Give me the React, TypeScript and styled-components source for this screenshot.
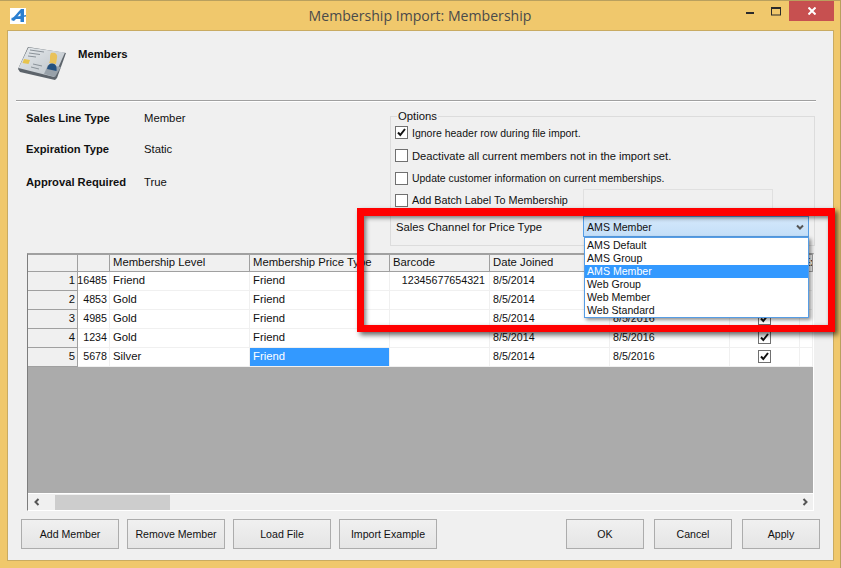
import React from 'react'
import styled, { createGlobalStyle } from 'styled-components'

const GlobalStyle = createGlobalStyle`
  html, body {
    margin: 0;
    padding: 0;
    background: #f0c86c;
  }
  body {
    font-family: "Liberation Sans", Arial, sans-serif;
    font-size: 11.3px;
    color: #111;
  }
`

const Window = styled.div`
  position: relative;
  width: 841px;
  height: 568px;
  box-sizing: border-box;
  display: flex;
  flex-direction: column;
  background: #f0c86c;
  border-top: 1px solid #b9a05e;
  border-right: 1px solid #b9a05e;
  overflow: hidden;
`

const TitleBar = styled.div`
  position: relative;
  height: 29px;
  flex: none;
  display: flex;
  align-items: flex-start;
  justify-content: center;
`

const AppLogo = styled.svg`
  position: absolute;
  left: 10px;
  top: 7px;
`

const Title = styled.div`
  font-family: "Open Sans", sans-serif;
  font-size: 14.1px;
  color: #4a4a4a;
  line-height: 30px;
`

const WindowControls = styled.div`
  position: absolute;
  top: 0;
  right: 6px;
  display: flex;
  align-items: flex-start;
`

const ControlButton = styled.div<{ $close?: boolean }>`
  width: ${(p) => (p.$close ? '45px' : '26px')};
  height: 20px;
  display: flex;
  align-items: center;
  justify-content: center;
  background: ${(p) => (p.$close ? '#c75050' : 'transparent')};
`

const Client = styled.div`
  width: 827px;
  height: 531px;
  margin-left: 7px;
  box-sizing: border-box;
  display: flex;
  flex-direction: column;
  background: #f0f0f0;
  border: 1px solid #c9ab62;
`

const Header = styled.div`
  height: 69px;
  flex: none;
  box-sizing: border-box;
  padding: 16px 0 0 10px;
  display: flex;
  align-items: flex-start;
  gap: 12px;
`

const HeaderTitle = styled.div`
  font-weight: bold;
  line-height: 14px;
`

const Separator = styled.div`
  height: 1px;
  flex: none;
  margin: 0 17px 0 8px;
  background: #a0a0a0;
  border-bottom: 1px solid #fff;
`

const Middle = styled.div`
  height: 151px;
  flex: none;
  display: flex;
  justify-content: space-between;
  padding: 7px 18px 0 18px;
  box-sizing: border-box;
`

const Details = styled.div`
  width: 300px;
  display: flex;
  flex-direction: column;
`

const DetailRow = styled.div<{ $h: number }>`
  height: ${(p) => p.$h}px;
  display: flex;
  align-items: center;
`

const DetailLabel = styled.div`
  width: 118px;
  font-weight: bold;
  font-size: 11.2px;
`

const DetailValue = styled.div``

const Options = styled.fieldset`
  width: 424px;
  height: 137px;
  margin: 0;
  padding: 0 5px;
  box-sizing: border-box;
  border: 1px solid #dcdcdc;
`

const OptionsLegend = styled.legend`
  padding: 0 1px;
  margin-left: 1px;
  line-height: 14px;
`

const OptionRow = styled.div<{ $h: number }>`
  height: ${(p) => p.$h}px;
  display: grid;
  grid-template-columns: 187px 1fr;
  align-items: center;
`

const CheckLabel = styled.label<{ $size: number }>`
  display: flex;
  align-items: center;
  gap: 4px;
  margin-left: -1px;
  white-space: nowrap;
  font-size: ${(p) => p.$size}px;
`

const CheckBox = styled.span`
  width: 13px;
  height: 13px;
  flex: none;
  box-sizing: border-box;
  display: flex;
  align-items: center;
  justify-content: center;
  background: #fff;
  border: 1px solid #707070;
`

const BatchInput = styled.div`
  width: 190px;
  height: 22px;
  box-sizing: border-box;
  border: 1px solid #e0e0e0;
  background: #f0f0f0;
`

const SalesRow = styled.div`
  margin-top: 4px;
  display: grid;
  grid-template-columns: 187px 1fr;
  align-items: center;
`

const Combo = styled.div`
  position: relative;
  height: 21px;
  box-sizing: border-box;
  width: 226px;
  padding: 0 3px 0 3px;
  display: flex;
  align-items: center;
  justify-content: space-between;
  font-size: 10.6px;
  border: 1px solid #569de5;
  background: linear-gradient(#d4e8fb, #c4dff8);
`

const DropList = styled.div`
  position: absolute;
  z-index: 3;
  top: 20px;
  left: 0;
  width: 225px;
  box-sizing: border-box;
  padding: 1px 0 0;
  background: #fff;
  border: 1px solid #569de5;
  box-shadow: 2px 2px 4px rgba(0, 0, 0, 0.45);
`

const DropItem = styled.div<{ $active?: boolean }>`
  height: 13px;
  line-height: 13px;
  padding: 0 2px;
  color: ${(p) => (p.$active ? '#fff' : '#111')};
  background: ${(p) => (p.$active ? '#3399ff' : 'transparent')};
`

const GridView = styled.div`
  width: 787px;
  height: 258px;
  margin-left: 19px;
  flex: none;
  box-sizing: border-box;
  display: flex;
  flex-direction: column;
  border-left: 1px solid #7d7d7d;
  border-top: 2px solid #a0a0a0;
  border-right: 1px solid #fff;
  border-bottom: 1px solid #fff;
  background: #ababab;
`

const GridRow = styled.div`
  display: grid;
  grid-template-columns: 50px 32px 140px 140px 100px 120px 120px 70px 13px;
  flex: none;
`

const HeadCell = styled.div`
  height: 16px;
  line-height: 15px;
  padding-left: 3px;
  background: #f0f0f0;
  border-right: 1px solid #a0a0a0;
  border-bottom: 1px solid #a0a0a0;
  white-space: nowrap;
  overflow: hidden;
`

const RowHead = styled.div`
  height: 19px;
  box-sizing: border-box;
  line-height: 16px;
  padding-right: 2px;
  text-align: right;
  background: #f0f0f0;
  border-right: 1px solid #a0a0a0;
  border-bottom: 1px solid #a0a0a0;
`

const Cell = styled.div<{ $right?: boolean; $selected?: boolean; $center?: boolean; $num?: boolean }>`
  height: 19px;
  box-sizing: border-box;
  padding: 0 ${(p) => (p.$right ? '2px' : '3px')} 2px 3px;
  white-space: nowrap;
  display: flex;
  align-items: center;
  font-size: ${(p) => (p.$num ? '10.7px' : 'inherit')};
  justify-content: ${(p) => (p.$right ? 'flex-end' : p.$center ? 'center' : 'flex-start')};
  color: ${(p) => (p.$selected ? '#fff' : '#111')};
  background: ${(p) => (p.$selected ? '#3399ff' : '#fff')};
  border-right: 1px solid #f0f0f0;
  border-bottom: 1px solid #f0f0f0;
`

const BarcodeCell = styled(Cell)`
  padding-right: 4px;
`

const GridFill = styled.div`
  flex: 1;
`

const ScrollBar = styled.div`
  height: 17px;
  flex: none;
  box-sizing: border-box;
  display: flex;
  align-items: center;
  background: #f0f0f0;
  border-top: 1px solid #fff;
`

const ScrollArrow = styled.div`
  width: 17px;
  display: flex;
  justify-content: center;
`

const ScrollThumb = styled.div`
  width: 115px;
  height: 15px;
  margin-left: 10px;
  background: #cdcdcd;
`

const ScrollTrack = styled.div`
  flex: 1;
`

const ButtonBar = styled.div`
  flex: none;
  margin-top: 8px;
  padding: 0 13px 0 13px;
  display: flex;
  justify-content: space-between;
`

const ButtonGroup = styled.div`
  display: flex;
  gap: 8px;
`

const RightButtonGroup = styled(ButtonGroup)`
  gap: 10px;
`

const Button = styled.div<{ $w: number }>`
  width: ${(p) => p.$w}px;
  height: 30px;
  box-sizing: border-box;
  display: flex;
  align-items: center;
  justify-content: center;
  font-size: 10.6px;
  border: 1px solid #acacac;
  background: linear-gradient(#f0f0f0, #e5e5e5);
`

const Callout = styled.div`
  position: absolute;
  left: 357px;
  top: 207px;
  width: 478px;
  height: 124px;
  box-sizing: border-box;
  border: 7px solid #ff0000;
  border-top-width: 8px;
  z-index: 4;
  pointer-events: none;
  box-shadow: 3px 3px 5px rgba(0, 0, 0, 0.6), inset 2px 2px 4px rgba(0, 0, 0, 0.5);
`

const Tick = () => (
  <svg width="9" height="9" viewBox="0 0 9 9">
    <path d="M1 4.5 L3.3 7 L8 1" fill="none" stroke="#111" strokeWidth="2" />
  </svg>
)

const Chevron = ({ dir }: { dir: 'left' | 'right' | 'down' }) => {
  const d = dir === 'left' ? 'M6.5 2 L3.5 5 L6.5 8' : dir === 'right' ? 'M3.5 2 L6.5 5 L3.5 8' : 'M2 3.5 L5 6.5 L8 3.5'
  return (
    <svg width="10" height="10" viewBox="0 0 10 10">
      <path d={d} fill="none" stroke="#555" strokeWidth="2" />
    </svg>
  )
}

const LogoMark = () => (
  <AppLogo width="16" height="16" viewBox="0 0 16 16">
    <rect width="16" height="16" fill="#fff" />
    <path d="M1 12 C4 9 7 5 11 1 L14 1 L14 14 L10.5 14 L10.5 11 L6 11 L4 13 Z M7.5 8.5 L10.5 8.5 L10.5 5 Z" fill="#2a7fd0" fillRule="evenodd" />
    <path d="M1 10 L16 7 L16 8.5 L2 11 Z" fill="#2a7fd0" />
  </AppLogo>
)

const CardIcon = () => (
  <svg width="48" height="34" viewBox="0 0 48 34">
    <defs>
      <linearGradient id="cardFace" x1="0" y1="0" x2="1" y2="1">
        <stop offset="0" stopColor="#e6eaed" />
        <stop offset="1" stopColor="#b9c0c6" />
      </linearGradient>
    </defs>
    <path d="M0 22 L2 25 L37 33 L39 31 L48 6 L10 0 Z" fill="#5d646b" />
    <path d="M0.5 21 L36 30 L47 5.5 L10.5 0.5 Z" fill="url(#cardFace)" />
    <path d="M30 18 L43 20 L37 30 L26 27 Z" fill="#98a1a9" />
    <path d="M12 3 L26 5 M11 6 L22 7.5 M10 9 L18 10 M15 17 L24 19 M13 20 L21 22" stroke="#8a9299" strokeWidth="1" />
    <path d="M6 12 L12 13 L10.5 17 L4.5 16 Z" fill="#e7c44e" />
    <path d="M33 6 C37 5 40 7 39 11 L38 17 L31 16 C33 13 31 9 33 6 Z" fill="#e9c25a" />
    <path d="M29 22 C29.5 18 32 16 34.5 16.5 C37 17 39 18 38.5 24 Z" fill="#24507e" />
  </svg>
)

const rows = [
  { n: 1, id: '16485', level: 'Friend', barcode: '12345677654321' },
  { n: 2, id: '4853', level: 'Gold', barcode: '' },
  { n: 3, id: '4985', level: 'Gold', barcode: '' },
  { n: 4, id: '1234', level: 'Gold', barcode: '' },
  { n: 5, id: '5678', level: 'Silver', barcode: '' },
]

const channels = ['AMS Default', 'AMS Group', 'AMS Member', 'Web Group', 'Web Member', 'Web Standard']

export default function App() {
  return (
    <Window>
      <GlobalStyle />
      <TitleBar>
        <LogoMark />
        <Title>Membership Import: Membership</Title>
        <WindowControls>
          <ControlButton>
            <svg width="8" height="8" viewBox="0 0 8 8">
              <rect x="0" y="5" width="8" height="2" fill="#2b2b2b" />
            </svg>
          </ControlButton>
          <ControlButton>
            <svg width="10" height="9" viewBox="0 0 10 9">
              <rect x="0.5" y="0.5" width="9" height="7.5" fill="none" stroke="#2b2b2b" />
              <rect x="0" y="0" width="10" height="2" fill="#2b2b2b" />
            </svg>
          </ControlButton>
          <ControlButton $close>
            <svg width="8" height="8" viewBox="0 0 8 8">
              <path d="M0.5 0.5 L7.5 7.5 M7.5 0.5 L0.5 7.5" stroke="#fff" strokeWidth="2" />
            </svg>
          </ControlButton>
        </WindowControls>
      </TitleBar>
      <Client>
        <Header>
          <CardIcon />
          <HeaderTitle>Members</HeaderTitle>
        </Header>
        <Separator />
        <Middle>
          <Details>
            <DetailRow $h={18}>
              <DetailLabel>Sales Line Type</DetailLabel>
              <DetailValue>Member</DetailValue>
            </DetailRow>
            <DetailRow $h={44}>
              <DetailLabel>Expiration Type</DetailLabel>
              <DetailValue>Static</DetailValue>
            </DetailRow>
            <DetailRow $h={22}>
              <DetailLabel>Approval Required</DetailLabel>
              <DetailValue>True</DetailValue>
            </DetailRow>
          </Details>
          <Options>
            <OptionsLegend>Options</OptionsLegend>
            <OptionRow $h={19}>
              <CheckLabel $size={10.5}><CheckBox><Tick /></CheckBox>Ignore header row during file import.</CheckLabel>
            </OptionRow>
            <OptionRow $h={27}>
              <CheckLabel $size={11.2}><CheckBox />Deactivate all current members not in the import set.</CheckLabel>
            </OptionRow>
            <OptionRow $h={19}>
              <CheckLabel $size={10.45}><CheckBox />Update customer information on current memberships.</CheckLabel>
            </OptionRow>
            <OptionRow $h={24}>
              <CheckLabel $size={10.8}><CheckBox />Add Batch Label To Membership</CheckLabel>
              <BatchInput />
            </OptionRow>
            <SalesRow>
              <div>Sales Channel for Price Type</div>
              <Combo>
                AMS Member
                <Chevron dir="down" />
                <DropList>
                  {channels.map((c) => (
                    <DropItem key={c} $active={c === 'AMS Member'}>{c}</DropItem>
                  ))}
                </DropList>
              </Combo>
            </SalesRow>
          </Options>
        </Middle>
        <GridView>
          <GridRow>
            <HeadCell />
            <HeadCell />
            <HeadCell>Membership Level</HeadCell>
            <HeadCell>Membership Price Type</HeadCell>
            <HeadCell>Barcode</HeadCell>
            <HeadCell>Date Joined</HeadCell>
            <HeadCell>Date Expires</HeadCell>
            <HeadCell>Active</HeadCell>
            <HeadCell>Ex</HeadCell>
          </GridRow>
          {rows.map((r) => (
            <GridRow key={r.n}>
              <RowHead>{r.n}</RowHead>
              <Cell $right $num>{r.id}</Cell>
              <Cell>{r.level}</Cell>
              <Cell $selected={r.n === 5}>Friend</Cell>
              <BarcodeCell $right $num>{r.barcode}</BarcodeCell>
              <Cell $num>8/5/2014</Cell>
              <Cell $num>8/5/2016</Cell>
              <Cell $center><CheckBox><Tick /></CheckBox></Cell>
              <Cell />
            </GridRow>
          ))}
          <GridFill />
          <ScrollBar>
            <ScrollArrow><Chevron dir="left" /></ScrollArrow>
            <ScrollThumb />
            <ScrollTrack />
            <ScrollArrow><Chevron dir="right" /></ScrollArrow>
          </ScrollBar>
        </GridView>
        <ButtonBar>
          <ButtonGroup>
            <Button $w={98}>Add Member</Button>
            <Button $w={98}>Remove Member</Button>
            <Button $w={98}>Load File</Button>
            <Button $w={98}>Import Example</Button>
          </ButtonGroup>
          <RightButtonGroup>
            <Button $w={78}>OK</Button>
            <Button $w={78}>Cancel</Button>
            <Button $w={78}>Apply</Button>
          </RightButtonGroup>
        </ButtonBar>
      </Client>
      <Callout />
    </Window>
  )
}
